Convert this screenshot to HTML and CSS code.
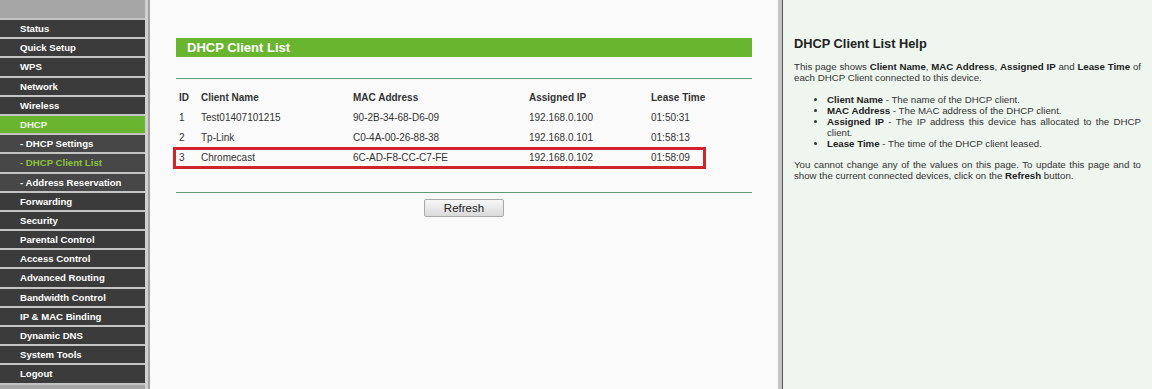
FILE: index.html
```html
<!DOCTYPE html>
<html lang="en">
<head>
    <meta charset="UTF-8">
    <title>DHCP Client List</title>
    <link rel="stylesheet" href="styles.css">
</head>
<body>
    <div class="page">
        <!-- Left menu -->
        <div class="sidebar">
            <div class="menu">
                <div class="menu-top"></div>
                <div class="item">Status</div>
                <div class="item">Quick Setup</div>
                <div class="item">WPS</div>
                <div class="item">Network</div>
                <div class="item">Wireless</div>
                <div class="item current">DHCP</div>
                <div class="item sub">- DHCP Settings</div>
                <div class="item sub active">- DHCP Client List</div>
                <div class="item sub">- Address Reservation</div>
                <div class="item">Forwarding</div>
                <div class="item">Security</div>
                <div class="item">Parental Control</div>
                <div class="item">Access Control</div>
                <div class="item">Advanced Routing</div>
                <div class="item">Bandwidth Control</div>
                <div class="item">IP &amp; MAC Binding</div>
                <div class="item">Dynamic DNS</div>
                <div class="item">System Tools</div>
                <div class="item">Logout</div>
                <div class="menu-bottom"></div>
            </div>
        </div>

        <!-- Main content -->
        <div class="main">
            <div class="title-bar">DHCP Client List</div>
            <div class="rule"></div>
            <div class="clients">
                <div class="row head">
                    <span>ID</span>
                    <span>Client Name</span>
                    <span>MAC Address</span>
                    <span>Assigned IP</span>
                    <span>Lease Time</span>
                </div>
                <div class="row">
                    <span>1</span>
                    <span>Test01407101215</span>
                    <span>90-2B-34-68-D6-09</span>
                    <span>192.168.0.100</span>
                    <span>01:50:31</span>
                </div>
                <div class="row">
                    <span>2</span>
                    <span>Tp-Link</span>
                    <span>C0-4A-00-26-88-38</span>
                    <span>192.168.0.101</span>
                    <span>01:58:13</span>
                </div>
                <div class="row marked">
                    <span>3</span>
                    <span>Chromecast</span>
                    <span>6C-AD-F8-CC-C7-FE</span>
                    <span>192.168.0.102</span>
                    <span>01:58:09</span>
                </div>
            </div>
            <div class="rule bottom"></div>
            <div class="actions">
                <button class="btn">Refresh</button>
            </div>
        </div>

        <!-- Help panel -->
        <div class="help">
            <h2>DHCP Client List Help</h2>
            <p>This page shows <b>Client Name</b>, <b>MAC Address</b>, <b>Assigned IP</b> and <b>Lease Time</b> of each DHCP Client connected to this device.</p>
            <ul>
                <li><b>Client Name</b> - The name of the DHCP client.</li>
                <li><b>MAC Address</b> - The MAC address of the DHCP client.</li>
                <li><b>Assigned IP</b> - The IP address this device has allocated to the DHCP client.</li>
                <li><b>Lease Time</b> - The time of the DHCP client leased.</li>
            </ul>
            <p>You cannot change any of the values on this page. To update this page and to show the current connected devices, click on the <b>Refresh</b> button.</p>
        </div>
    </div>
</body>
</html>
```

FILE: styles.css
```css
html, body {
    margin: 0;
    padding: 0;
    height: 100%;
    overflow: hidden;
}

body {
    font-family: "Liberation Sans", Arial, sans-serif;
    color: #333;
}

.page {
    display: flex;
    height: 389px;
}

/* Left menu */
.sidebar {
    width: 148px;
    border-right: 2px solid #a2a2a2;
    background: #a6a6a6;
    flex-shrink: 0;
}

.menu {
    width: 145px;
    border-right: 3px solid #d0d0d0;
    height: 100%;
    background: #a6a6a6;
}

.menu-top {
    height: 18px;
}

.item {
    height: 17.2px;
    line-height: 17.2px;
    border-top: 2px solid #c4c4c4;
    background: #3b3b3b;
    color: #fff;
    font-size: 9.6px;
    font-weight: bold;
    padding-left: 20px;
    white-space: nowrap;
}

.item.current {
    background: #6ab52f;
    color: #eef7e4;
}

.item.sub {
    background: #474747;
}

.item.active {
    color: #8cc43e;
}

.menu-bottom {
    border-top: 2px solid #c4c4c4;
}

/* Main area */
.main {
    width: 576px;
    background: #fafafa;
    border-right: 4px solid #c6c6c6;
    padding: 38px 26px 0 26px;
    flex-shrink: 0;
}

.title-bar {
    height: 19px;
    line-height: 19px;
    background: #6ab52f;
    color: #fff;
    font-size: 13px;
    font-weight: bold;
    padding-left: 11px;
}

.rule {
    margin-top: 21px;
    border-top: 1px solid #5f9a76;
}

.rule.bottom {
    margin-top: 24px;
}

.clients {
    margin-top: 9px;
}

.row {
    display: grid;
    grid-template-columns: 22px 152px 176px 122px auto;
    height: 20px;
    line-height: 20px;
    padding-left: 3px;
    font-size: 10px;
    color: #333;
    position: relative;
}

.row.head {
    font-weight: bold;
    color: #333;
}

.row.marked::after {
    content: "";
    position: absolute;
    left: -3px;
    top: -1px;
    width: 533px;
    height: 22px;
    border: 3px solid #d1232e;
    box-sizing: border-box;
}

.actions {
    display: flex;
    justify-content: center;
    margin-top: 6px;
}

.btn {
    width: 80px;
    height: 18px;
    padding: 0;
    font-family: "Liberation Sans", Arial, sans-serif;
    font-size: 11.5px;
    color: #222;
    background: linear-gradient(#f7f7f7, #dadada);
    border: 1px solid #a9a9a9;
    border-radius: 2px;
}

/* Help panel */
.help {
    flex: 1;
    background: #eff5ef;
    border-left: 1px solid #555;
    padding: 36px 11px 0 11px;
    font-size: 9.7px;
    line-height: 11px;
    color: #333;
}

.help h2 {
    margin: 0;
    font-size: 12.8px;
    line-height: 16px;
    color: #222;
}

.help p {
    margin: 8.5px 0 0 0;
    text-align: justify;
}

.help ul {
    margin: 11px 0 0 0;
    padding-left: 33px;
    text-align: justify;
}

.help ul + p {
    margin-top: 10px;
}

.help b {
    color: #222;
}
```
